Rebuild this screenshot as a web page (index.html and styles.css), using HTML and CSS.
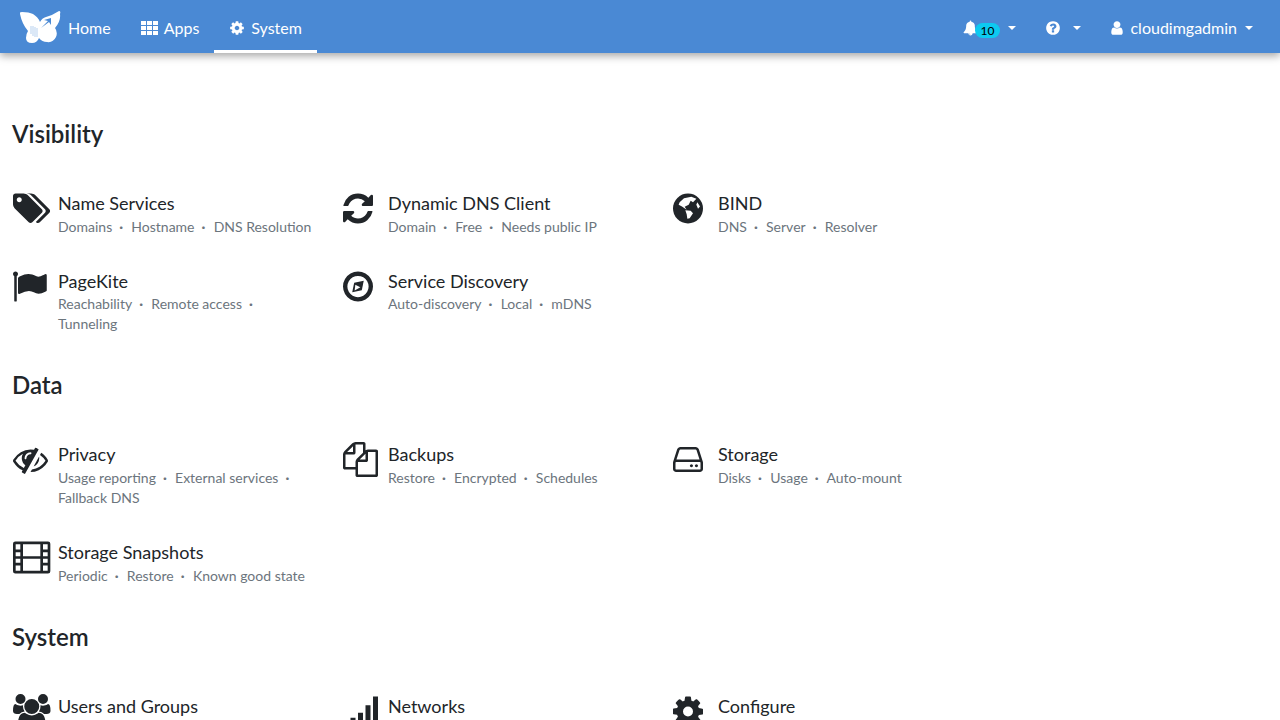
FILE: index.html
```html
<!DOCTYPE html>
<html lang="en">
<head>
    <meta charset="UTF-8">
    <meta name="viewport" content="width=device-width, initial-scale=1.0">
    <title>System</title>
    <link rel="stylesheet" href="styles.css">
</head>
<body>

<!-- Top Bar -->
<nav class="top-bar">
    <div class="nav-group">
        <a class="brand" href="#">
            <svg class="brand-logo" viewBox="0 0 41 32">
                <path d="M0 3Q-1 1 2 1Q9 1 13 3Q18 6 20 11Q22 7 26 6Q33 4 39 0Q41 0 40 3Q41 10 35 17Q38 21 36 26Q33 32 27 31Q22 31 19 27Q17 32 12 32Q6 32 6 27Q6 23 8 20Q2 13 0 3Z" fill="#fff"/>
                <path d="M21 17L28 10L24 9L31 7L31 14L29 11Z" fill="#4a89d4"/>
                <path d="M11 15V23M13 15V25M15 16V26M17 17V26" stroke="#4a89d4" stroke-width=".4"/>
            </svg>
            <span>Home</span>
        </a>
        <a class="nav-link" href="#">
            <svg class="nav-icon apps-icon" viewBox="0 0 17 14">
                <path d="M0 0h5v4H0zM6 0h5v4H6zM12 0h5v4h-5zM0 5h5v4H0zM6 5h5v4H6zM12 5h5v4h-5zM0 10h5v4H0zM6 10h5v4H6zM12 10h5v4h-5z"/>
            </svg>
            <span>Apps</span>
        </a>
        <a class="nav-link active" href="#">
            <svg class="nav-icon" viewBox="0 0 1792 1792"><use href="#i-cog"/></svg>
            <span>System</span>
        </a>
    </div>
    <div class="nav-group">
        <a class="nav-link tight" href="#">
            <svg class="nav-icon bell-icon" viewBox="0 0 1792 1792">
                <path d="M912 1696q0-16-16-16-59 0-101.5-42.5t-42.5-101.5q0-16-16-16t-16 16q0 73 51.5 124.5t124.5 51.5q16 0 16-16zm816-288q0 52-38 90t-90 38h-448q0 106-75 181t-181 75-181-75-75-181h-448q-52 0-90-38t-38-90q50-42 91-88t85-119.5 74.5-158.5 50-206 19.5-260q0-152 117-282.5t307-158.5q-8-19-8-39 0-40 28-68t68-28 68 28 28 68q0 20-8 39 190 28 307 158.5t117 282.5q0 139 19.5 260t50 206 74.5 158.5 85 119.5 91 88z"/>
            </svg>
            <span class="badge">10</span>
            <i class="caret"></i>
        </a>
        <a class="nav-link tight" href="#">
            <svg class="nav-icon help-icon" viewBox="128 0 1536 1792">
                <path d="M1024 1376v-192q0-14-9-23t-23-9h-192q-14 0-23 9t-9 23v192q0 14 9 23t23 9h192q14 0 23-9t9-23zm256-672q0-88-55.5-163t-138.5-116-170-41q-243 0-371 213-15 24 8 42l132 100q7 6 19 6 16 0 25-12 53-68 86-92 34-24 86-24 48 0 85.5 26t37.5 59q0 38-20 61t-68 45q-63 28-115.5 86.5t-52.5 125.5v36q0 14 9 23t23 9h192q14 0 23-9t9-23q0-19 21.5-49.5t54.5-49.5q32-18 49-28.5t46-35 44.5-48 28-60.5 12.5-81zm384 192q0 209-103 385.5t-279.5 279.5-385.5 103-385.5-103-279.5-279.5-103-385.5 103-385.5 279.5-279.5 385.5-103 385.5 103 279.5 279.5 103 385.5z"/>
            </svg>
            <i class="caret"></i>
        </a>
        <a class="nav-link tight" href="#">
            <svg class="nav-icon user-icon" viewBox="256 0 1280 1792">
                <path d="M1536 1399q0 109-62.5 187t-150.5 78h-854q-88 0-150.5-78t-62.5-187q0-85 8.5-160.5t31.5-152 58.5-131 94-89 134.5-34.5q131 128 313 128t313-128q76 0 134.5 34.5t94 89 58.5 131 31.5 152 8.5 160.5zm-256-887q0 159-112.5 271.5t-271.5 112.5-271.5-112.5-112.5-271.5 112.5-271.5 271.5-112.5 271.5 112.5 112.5 271.5z"/>
            </svg>
            <span>cloudimgadmin</span>
            <i class="caret"></i>
        </a>
    </div>
</nav>

<!-- Shared icon -->
<svg class="icon-defs">
    <defs>
        <path id="i-cog" d="M1152 896q0-106-75-181t-181-75-181 75-75 181 75 181 181 75 181-75 75-181zm512-109v222q0 12-8 23t-20 13l-185 28q-19 54-39 91 35 50 107 138 10 12 10 25t-9 23q-27 37-99 108t-94 71q-12 0-26-9l-138-108q-44 23-91 38-16 136-29 186-7 28-36 28h-222q-14 0-24.5-8.5t-11.5-21.5l-28-184q-49-16-90-37l-141 107q-10 9-25 9-14 0-25-11-126-114-165-168-7-10-7-23 0-12 8-23 15-21 51-66.5t54-70.5q-27-50-41-99l-183-27q-13-2-21-12.5t-8-23.5v-222q0-12 8-23t19-13l186-28q14-46 39-92-40-57-107-138-10-12-10-24 0-10 9-23 26-36 98.5-107.5t94.5-71.5q13 0 26 10l138 107q44-23 91-38 16-136 29-186 7-28 36-28h222q14 0 24.5 8.5t11.5 21.5l28 184q49 16 90 37l142-107q9-9 24-9 13 0 25 10 129 119 165 170 7 8 7 22 0 12-8 23-15 21-51 66.5t-54 70.5q26 50 41 98l183 28q13 2 21 12.5t8 23.5z"/>
    </defs>
</svg>

<!-- Main Content -->
<main class="content">

    <section class="app-section">
        <h2>Visibility</h2>
        <div class="app-grid">
            <a class="app-item" href="#">
                <svg class="app-icon" viewBox="0 0 1920 1792" preserveAspectRatio="xMinYMid">
                    <path d="M448 448q0-53-37.5-90.5t-90.5-37.5-90.5 37.5-37.5 90.5 37.5 90.5 90.5 37.5 90.5-37.5 37.5-90.5zm1067 576q0 53-37 90l-491 492q-39 37-91 37-53 0-90-37l-715-716q-38-37-64.5-101t-26.5-117v-416q0-52 38-90t90-38h416q53 0 117 26.5t102 64.5l715 714q37 39 37 91zm384 0q0 53-37 90l-491 492q-39 37-91 37-36 0-59-14t-53-45l470-470q37-37 37-90 0-52-37-91l-715-714q-38-38-102-64.5t-117-26.5h224q53 0 117 26.5t102 64.5l715 714q37 39 37 91z"/>
                </svg>
                <div class="app-text">
                    <h3>Name Services</h3>
                    <p><span>Domains</span> <span>Hostname</span> <span>DNS Resolution</span></p>
                </div>
            </a>
            <a class="app-item" href="#">
                <svg class="app-icon" viewBox="128 0 1536 1792" preserveAspectRatio="xMinYMid">
                    <path d="M1639 1056q0 5-1 7-64 268-268 434.5t-478 166.5q-146 0-282.5-55t-243.5-157l-129 129q-19 19-45 19t-45-19-19-45v-448q0-26 19-45t45-19h448q26 0 45 19t19 45-19 45l-137 137q71 66 161 102t187 36q134 0 250-65t186-179q11-17 53-117 8-23 30-23h192q13 0 22.5 9.5t9.5 22.5zm25-800v448q0 26-19 45t-45 19h-448q-26 0-45-19t-19-45 19-45l138-138q-148-137-349-137-134 0-250 65t-186 179q-11 17-53 117-8 23-30 23h-199q-13 0-22.5-9.5t-9.5-22.5v-7q65-268 270-434.5t480-166.5q146 0 284 55.5t245 156.5l130-129q19-19 45-19t45 19 19 45z"/>
                </svg>
                <div class="app-text">
                    <h3>Dynamic DNS Client</h3>
                    <p><span>Domain</span> <span>Free</span> <span>Needs public IP</span></p>
                </div>
            </a>
            <a class="app-item" href="#">
                <svg class="app-icon" viewBox="128 0 1536 1792" preserveAspectRatio="xMinYMid">
                    <circle cx="896" cy="896" r="768"/>
                    <path class="cut" d="M468 571L691 366L1067 297L1324 400L1152 571L1033 503L930 708L725 810L828 964L588 794L417 708Z"/>
                    <path class="cut" d="M759 981L1033 1016L1152 1135L981 1392L862 1426L828 1187Z"/>
                    <path class="cut" d="M1375 571L1512 793L1409 913L1324 708Z"/>
                </svg>
                <div class="app-text">
                    <h3>BIND</h3>
                    <p><span>DNS</span> <span>Server</span> <span>Resolver</span></p>
                </div>
            </a>
            <a class="app-item" href="#">
                <svg class="app-icon" viewBox="64 0 1728 1792" preserveAspectRatio="xMinYMid">
                    <path d="M320 256q0 72-64 110v1266q0 13-9.5 22.5t-22.5 9.5h-64q-13 0-22.5-9.5t-9.5-22.5v-1266q-64-38-64-110 0-53 37.5-90.5t90.5-37.5 90.5 37.5 37.5 90.5zm1472 64v763q0 25-12.5 38.5t-39.5 27.5q-215 116-369 116-61 0-123.5-22t-108.5-48-115.5-48-142.5-22q-192 0-464 146-17 9-33 9-26 0-45-19t-19-45v-742q0-32 31-55 21-14 79-43 236-120 421-120 107 0 200 29t219 88q38 19 88 19 54 0 117.5-21t110-47 88-47 54.5-21q26 0 45 19t19 45z"/>
                </svg>
                <div class="app-text">
                    <h3>PageKite</h3>
                    <p><span>Reachability</span> <span>Remote access</span> <span>Tunneling</span></p>
                </div>
            </a>
            <a class="app-item" href="#">
                <svg class="app-icon" viewBox="128 0 1536 1792" preserveAspectRatio="xMinYMid">
                    <path fill-rule="evenodd" d="M896 128a768 768 0 1 0 .1 0zM896 352a544 544 0 1 1-.1 0z"/>
                    <path d="M1190 600L1090 1090L600 1190L700 700Z"/>
                    <path class="cut" d="M759 811L1016 930L725 1101Z"/>
                </svg>
                <div class="app-text">
                    <h3>Service Discovery</h3>
                    <p><span>Auto-discovery</span> <span>Local</span> <span>mDNS</span></p>
                </div>
            </a>
        </div>
    </section>

    <section class="app-section">
        <h2>Data</h2>
        <div class="app-grid">
            <a class="app-item" href="#">
                <svg class="app-icon" viewBox="0 0 1792 1792" preserveAspectRatio="xMinYMid">
                    <path d="M555 1335l78-141q-87-63-136-159t-49-203q0-121 61-225-229 117-381 353 167 258 427 375zm389-759q0-20-14-34t-34-14q-125 0-214.5 89.5t-89.5 214.5q0 20 14 34t34 14 34-14 14-34q0-86 61-147t147-61q20 0 34-14t14-34zm363-191q0 7-1 9-106 189-316 567t-315 566l-49 89q-10 16-28 16-12 0-134-70-16-10-16-28 0-12 44-87-143-65-263.5-173t-208.5-245q-20-31-20-69t20-69q153-235 380-371t496-136q89 0 180 17l54-97q10-16 28-16 5 0 18 6t31 15.5 33 18.5 31.5 18.5 19.5 11.5q16 10 16 27zm37 447q0 139-79 253.5t-209 164.5l280-502q8 45 8 84zm448 128q0 35-20 69-39 64-109 145-150 172-347.5 267t-419.5 95l74-132q212-18 392.5-137t301.5-307q-115-179-282-294l63-112q95 64 182.5 153t144.5 184q20 34 20 69z"/>
                </svg>
                <div class="app-text">
                    <h3>Privacy</h3>
                    <p><span>Usage reporting</span> <span>External services</span> <span>Fallback DNS</span></p>
                </div>
            </a>
            <a class="app-item" href="#">
                <svg class="app-icon" viewBox="0 0 1792 1792" preserveAspectRatio="xMinYMid">
                    <path d="M1696 384q40 0 68 28t28 68v1216q0 40-28 68t-68 28h-960q-40 0-68-28t-28-68v-288h-544q-40 0-68-28t-28-68v-672q0-40 20-88t48-76l408-408q28-28 76-48t88-20h416q40 0 68 28t28 68v328q68-40 128-40h416zm-544 213l-299 299h299v-299zm-640-384l-299 299h299v-299zm196 647l316-316v-416h-384v416q0 40-28 68t-68 28h-416v640h512v-256q0-40 20-88t48-76zm956 804v-1152h-384v416q0 40-28 68t-68 28h-416v640h896z"/>
                </svg>
                <div class="app-text">
                    <h3>Backups</h3>
                    <p><span>Restore</span> <span>Encrypted</span> <span>Schedules</span></p>
                </div>
            </a>
            <a class="app-item" href="#">
                <svg class="app-icon" viewBox="16 0 1536 1792" preserveAspectRatio="xMinYMid">
                    <path d="M1040 1216q0 33-23.5 56.5t-56.5 23.5-56.5-23.5-23.5-56.5 23.5-56.5 56.5-23.5 56.5 23.5 23.5 56.5zm256 0q0 33-23.5 56.5t-56.5 23.5-56.5-23.5-23.5-56.5 23.5-56.5 56.5-23.5 56.5 23.5 23.5 56.5zm128 160v-320q0-13-9.5-22.5t-22.5-9.5h-1216q-13 0-22.5 9.5t-9.5 22.5v320q0 13 9.5 22.5t22.5 9.5h1216q13 0 22.5-9.5t9.5-22.5zm-1230-480h1180l-157-482q-4-13-16-21.5t-26-8.5h-782q-14 0-26 8.5t-16 21.5zm1358 160v320q0 66-47 113t-113 47h-1216q-66 0-113-47t-47-113v-320q0-25 16-75l197-606q17-53 63-86t101-33h782q55 0 101 33t63 86l197 606q16 50 16 75z"/>
                </svg>
                <div class="app-text">
                    <h3>Storage</h3>
                    <p><span>Disks</span> <span>Usage</span> <span>Auto-mount</span></p>
                </div>
            </a>
            <a class="app-item" href="#">
                <svg class="app-icon" viewBox="0 56 1792 1680" preserveAspectRatio="xMinYMid">
                    <path fill-rule="evenodd" d="M112 128H1680Q1792 128 1792 240V1552Q1792 1664 1680 1664H112Q0 1664 0 1552V240Q0 128 112 128ZM128 256V512H352V256ZM128 640V832H352V640ZM128 960V1152H352V960ZM128 1280V1536H352V1280ZM480 256V832H1312V256ZM480 960V1536H1312V960ZM1440 256V512H1664V256ZM1440 640V832H1664V640ZM1440 960V1152H1664V960ZM1440 1280V1536H1664V1280Z"/>
                </svg>
                <div class="app-text">
                    <h3>Storage Snapshots</h3>
                    <p><span>Periodic</span> <span>Restore</span> <span>Known good state</span></p>
                </div>
            </a>
        </div>
    </section>

    <section class="app-section">
        <h2>System</h2>
        <div class="app-grid">
            <a class="app-item" href="#">
                <svg class="app-icon" viewBox="0 0 1920 1792" preserveAspectRatio="xMinYMid">
                    <path d="M593 896q-162 5-265 128h-134q-82 0-138-40.5t-56-118.5q0-353 124-353 6 0 43.5 21t97.5 42.5 119 21.5q67 0 133-23-5 37-5 66 0 139 81 256zm1071 637q0 120-73 189.5t-194 69.5h-874q-121 0-194-69.5t-73-189.5q0-53 3.5-103.5t14-109 26.5-108.5 43-97.5 62-81 85.5-53.5 111.5-20q10 0 43 21.5t73 48 107 48 135 21.5 135-21.5 107-48 73-48 43-21.5q61 0 111.5 20t85.5 53.5 62 81 43 97.5 26.5 108.5 14 109 3.5 103.5zm-1024-1277q0 106-75 181t-181 75-181-75-75-181 75-181 181-75 181 75 75 181zm704 384q0 159-112.5 271.5t-271.5 112.5-271.5-112.5-112.5-271.5 112.5-271.5 271.5-112.5 271.5 112.5 112.5 271.5zm576 225q0 78-56 118.5t-138 40.5h-134q-103-123-265-128 81-117 81-256 0-29-5-66 66 23 133 23 59 0 119-21.5t97.5-42.5 43.5-21q124 0 124 353zm-128-609q0 106-75 181t-181 75-181-75-75-181 75-181 181-75 181 75 75 181z"/>
                </svg>
                <div class="app-text">
                    <h3>Users and Groups</h3>
                </div>
            </a>
            <a class="app-item" href="#">
                <svg class="app-icon" viewBox="0 0 1792 1792" preserveAspectRatio="xMinYMid">
                    <path d="M0 1344H256V1664H0ZM384 1216H640V1664H384ZM768 960H1024V1664H768ZM1152 576H1408V1664H1152ZM1536 128H1792V1664H1536Z"/>
                </svg>
                <div class="app-text">
                    <h3>Networks</h3>
                </div>
            </a>
            <a class="app-item" href="#">
                <svg class="app-icon" viewBox="128 0 1536 1792" preserveAspectRatio="xMinYMid"><use href="#i-cog"/></svg>
                <div class="app-text">
                    <h3>Configure</h3>
                </div>
            </a>
        </div>
    </section>

</main>

</body>
</html>
```

FILE: styles.css
```css
/* Basic Reset */
* {
    margin: 0;
    padding: 0;
    box-sizing: border-box;
}

body {
    font-family: 'Lato', sans-serif;
    background-color: #ffffff;
    color: #212529;
}

a {
    color: inherit;
    text-decoration: none;
}

.icon-defs {
    display: none;
}

/* Top Bar */
.top-bar {
    display: flex;
    justify-content: space-between;
    height: 53px;
    padding: 0 12px 0 20px;
    background-color: #4a89d4;
    box-shadow: 0 3px 8px rgba(0, 0, 0, 0.35);
    color: #ffffff;
    font-size: 16px;
}

.nav-group {
    display: flex;
}

.brand {
    display: flex;
    align-items: center;
    gap: 7px;
    padding-right: 15px;
}

.brand span {
    margin-top: 2px;
}

.brand-logo {
    width: 41px;
    height: 32px;
}

.nav-link {
    display: flex;
    align-items: center;
    gap: 6px;
    height: 53px;
    padding: 5px 15px 0;
    border-bottom: 3px solid transparent;
}

.nav-link.active {
    border-bottom-color: #ffffff;
}

.nav-link.tight {
    gap: 7px;
}

.nav-icon {
    width: 16px;
    height: 16px;
    fill: #ffffff;
}

.apps-icon {
    width: 17px;
    height: 14px;
}

.bell-icon {
    width: 15px;
    margin-right: -10px;
}

.help-icon {
    width: 14px;
    margin-right: 5.5px;
}

.user-icon {
    width: 12px;
}

.badge {
    margin-top: 5px;
    padding: 0 5.5px;
    border-radius: 8px;
    background-color: #0dcaf0;
    color: #000000;
    font-size: 12px;
    line-height: 15px;
}

.caret {
    width: 0;
    height: 0;
    margin-left: 1px;
    border-top: 4px solid #ffffff;
    border-left: 4px solid transparent;
    border-right: 4px solid transparent;
}

/* Main Layout */
.content {
    padding: 66px 12px 0 13px;
}

.app-section {
    margin-bottom: 36.05px;
}

.app-section h2 {
    margin-left: -1px;
    margin-bottom: 41.7px;
    font-size: 24px;
    font-weight: 600;
    line-height: 29px;
}

.app-grid {
    display: grid;
    grid-template-columns: repeat(3, 330px);
    row-gap: 31px;
}

.app-item {
    display: flex;
    align-items: flex-start;
}

.app-icon {
    flex: none;
    width: 45px;
    height: 35px;
    margin-top: 1px;
    fill: #212529;
}

.app-icon .cut {
    fill: #ffffff;
}

.app-text {
    width: 258px;
}

.app-text h3 {
    font-size: 18px;
    font-weight: 400;
    line-height: 26.85px;
}

.app-text p {
    font-size: 14px;
    line-height: 20px;
    color: #6c757d;
}

.app-text span:not(:last-child)::after {
    content: "·";
    margin-left: 7px;
    margin-right: 4.7px;
    font-weight: 700;
}
```
